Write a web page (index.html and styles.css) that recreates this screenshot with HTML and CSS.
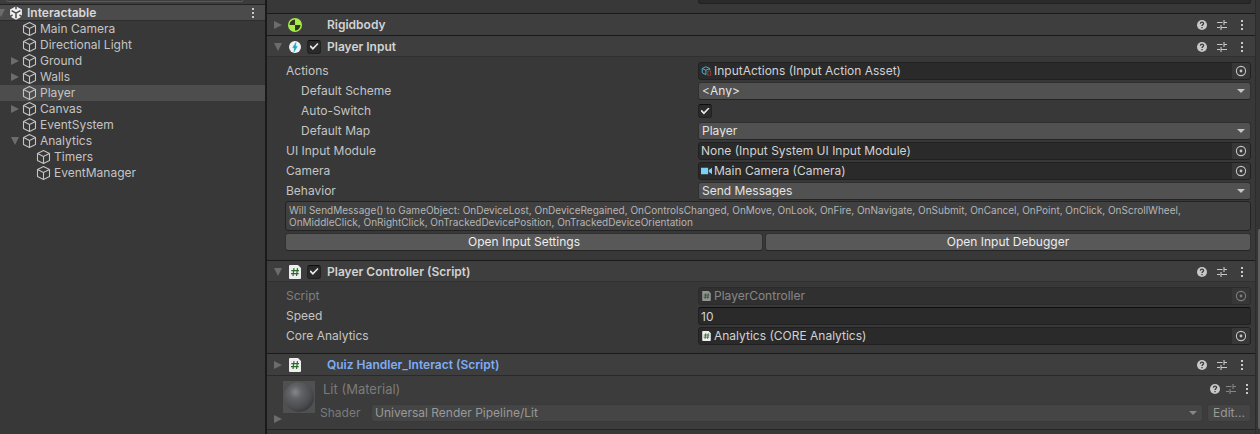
FILE: index.html
```
<!DOCTYPE html>
<html lang="en">
<head>
<meta charset="utf-8">
<title>Interactable - Inspector</title>
<link rel="stylesheet" href="styles.css">
</head>
<body>
<svg class="defs" aria-hidden="true">
  <symbol id="cube" viewBox="0 0 16 16"><path d="M7.500 1.500 13.500 4.500v7L7.500 14.500 1.500 11.500v-7zM1.500 4.500l6 3 6-3M7.500 7.500v7" fill="none" stroke="currentColor" stroke-width="1.100" stroke-linejoin="round"/></symbol>
  <symbol id="right" viewBox="0 0 8 8"><path d="M0 0 8 4 0 8z" fill="currentColor"/></symbol>
  <symbol id="down" viewBox="0 0 8 8"><path d="M0 0h8L4 8z" fill="currentColor"/></symbol>
  <symbol id="dots" viewBox="0 0 4 12"><path d="M1 1h2v2H1zM1 5h2v2H1zM1 9h2v2H1z" fill="currentColor"/></symbol>
  <symbol id="help" viewBox="0 0 10 10"><circle cx="5" cy="5" r="5" fill="currentColor"/><path d="M3.4 3.7c0-2.1 3.2-2.1 3.2-.1C6.600 4.700 5 4.600 5 6M5 7v1.300" fill="none" stroke="#3c3c3c" stroke-width="1.300"/></symbol>
  <symbol id="preset" viewBox="0 0 10 10"><path d="M0 2.500h5.500M7 2.500h3M7 0v5M0 7.500h3M4.500 7.500H10M4 5v5" fill="none" stroke="currentColor" stroke-width="1.100"/></symbol>
  <symbol id="pick" viewBox="0 0 12 12"><circle cx="6" cy="6" r="4.600" fill="none" stroke="currentColor" stroke-width="1.100"/><circle cx="6" cy="6" r="1.400" fill="currentColor"/></symbol>
  <symbol id="script" viewBox="0 0 12 14"><path d="M1 0h8l3 3v10q0 1-1 1H1q-1 0-1-1V1q0-1 1-1z" fill="#eee"/><path d="M5 3.200 4 11M8.500 3.200 7.500 11M2.300 5.700h7.700M2 8.600h7.700" fill="none" stroke="#2c6b2d" stroke-width="1.200"/></symbol>
  <symbol id="rigid" viewBox="0 0 14 14"><circle cx="7" cy="7" r="7" fill="#a8ec49"/><path d="M7 7V1.500A5.500 5.500 0 0 0 1.500 7zM7 7v5.500A5.500 5.500 0 0 0 12.500 7z" fill="#303820"/></symbol>
  <symbol id="bolt" viewBox="0 0 12 12"><circle cx="6" cy="6" r="6" fill="#f2f2f2"/><path d="M6.900 1.500 3.800 6.700h1.700L5.100 10.700 8.200 5.400H6.500z" fill="#18a4cc" stroke="#18a4cc" stroke-width=".6"/></symbol>
  <symbol id="asset" viewBox="0 0 11 11"><path d="M4.800.8 9 2.700v2M5 9.600.8 7.500V2.700L4.800.8M.8 2.700l4 2 4.200-2M4.800 4.700v4.900" fill="none" stroke="#52a9c8" stroke-width="1.100"/><path d="M8 5.500H7v1.700l-.7.700.7.700v1.700h1M9 5.500h1v1.700l.7.700-.7.700v1.700H9" fill="none" stroke="#c6502e" stroke-width=".8"/></symbol>
  <symbol id="cam" viewBox="0 0 10 7"><path d="M0 .5h6.500v6H0zM7.200 2.500 10 .5v6l-2.800-2z" fill="#7ad0f5"/></symbol>
  <symbol id="unity" viewBox="0 0 14 14"><path d="M7 .2 12.900 3.600v6.800L7 13.800 1.100 10.400V3.600z" fill="#f0f0f0"/><path d="M7 7.200v5M7 7.200 2.600 4.700M7 7.200l4.400-2.500M7 0v3.300M.5 10.800l3-1.800M13.500 10.800l-3-1.800" fill="none" stroke="#4b4b4b" stroke-width="1.500"/></symbol>
</svg>

<div class="editor">
  <aside class="hierarchy">
    <div class="toolbar"><div class="search"></div></div>
    <header class="scene">
      <button class="fold" aria-label="Collapse scene"><svg><use href="#down"/></svg></button>
      <svg class="logo"><use href="#unity"/></svg>
      <span class="grow">Interactable</span>
      <button class="icon-btn" aria-label="Scene menu"><svg class="dots"><use href="#dots"/></svg></button>
    </header>
    <ul class="tree">
      <li class="node"><span class="fold"></span><svg class="cube"><use href="#cube"/></svg>Main Camera</li>
      <li class="node"><span class="fold"></span><svg class="cube"><use href="#cube"/></svg>Directional Light</li>
      <li class="node"><button class="fold" aria-label="Expand Ground"><svg><use href="#right"/></svg></button><svg class="cube"><use href="#cube"/></svg>Ground</li>
      <li class="node"><button class="fold" aria-label="Expand Walls"><svg><use href="#right"/></svg></button><svg class="cube"><use href="#cube"/></svg>Walls</li>
      <li class="node selected"><span class="fold"></span><svg class="cube"><use href="#cube"/></svg>Player</li>
      <li class="node"><button class="fold" aria-label="Expand Canvas"><svg><use href="#right"/></svg></button><svg class="cube"><use href="#cube"/></svg>Canvas</li>
      <li class="node"><span class="fold"></span><svg class="cube"><use href="#cube"/></svg>EventSystem</li>
      <li class="node"><button class="fold" aria-label="Collapse Analytics"><svg><use href="#down"/></svg></button><svg class="cube"><use href="#cube"/></svg>Analytics</li>
      <li class="node child"><span class="fold"></span><svg class="cube"><use href="#cube"/></svg>Timers</li>
      <li class="node child"><span class="fold"></span><svg class="cube"><use href="#cube"/></svg>EventManager</li>
    </ul>
  </aside>

  <main class="inspector">
    <div class="previous"><div class="previous-field"></div></div>

    <section>
      <header class="component">
        <button class="fold" aria-label="Expand Rigidbody"><svg><use href="#right"/></svg></button>
        <svg class="kind"><use href="#rigid"/></svg>
        <span class="toggle"></span>
        <h2>Rigidbody</h2>
        <div class="actions">
          <button class="icon-btn" aria-label="Help"><svg><use href="#help"/></svg></button>
          <button class="icon-btn" aria-label="Presets"><svg><use href="#preset"/></svg></button>
          <button class="icon-btn" aria-label="More"><svg class="dots"><use href="#dots"/></svg></button>
        </div>
      </header>
    </section>

    <section>
      <header class="component open">
        <button class="fold" aria-label="Collapse Player Input"><svg><use href="#down"/></svg></button>
        <svg class="kind small"><use href="#bolt"/></svg>
        <input class="check toggle" type="checkbox" checked aria-label="Enable Player Input">
        <h2>Player Input</h2>
        <div class="actions">
          <button class="icon-btn" aria-label="Help"><svg><use href="#help"/></svg></button>
          <button class="icon-btn" aria-label="Presets"><svg><use href="#preset"/></svg></button>
          <button class="icon-btn" aria-label="More"><svg class="dots"><use href="#dots"/></svg></button>
        </div>
      </header>
      <div class="props input-props">
        <div class="row"><span>Actions</span>
          <div class="object"><svg class="mini"><use href="#asset"/></svg><span class="grow">InputActions (Input Action Asset)</span><button class="picker" aria-label="Pick actions"><svg><use href="#pick"/></svg></button></div></div>
        <div class="row sub"><label for="scheme">Default Scheme</label>
          <div class="drop"><select id="scheme"><option>&lt;Any&gt;</option></select></div></div>
        <div class="row sub"><label for="auto">Auto-Switch</label>
          <input class="check" id="auto" type="checkbox" checked></div>
        <div class="row sub"><label for="map">Default Map</label>
          <div class="drop"><select id="map"><option>Player</option></select></div></div>
        <div class="row"><span>UI Input Module</span>
          <div class="object"><span class="grow">None (Input System UI Input Module)</span><button class="picker" aria-label="Pick input module"><svg><use href="#pick"/></svg></button></div></div>
        <div class="row"><span>Camera</span>
          <div class="object"><svg class="mini"><use href="#cam"/></svg><span class="grow">Main Camera (Camera)</span><button class="picker" aria-label="Pick camera"><svg><use href="#pick"/></svg></button></div></div>
        <div class="row"><label for="behavior">Behavior</label>
          <div class="drop"><select id="behavior"><option>Send Messages</option></select></div></div>
        <p class="note">Will SendMessage() to GameObject: OnDeviceLost, OnDeviceRegained, OnControlsChanged, OnMove, OnLook, OnFire, OnNavigate, OnSubmit, OnCancel, OnPoint, OnClick, OnScrollWheel, OnMiddleClick, OnRightClick, OnTrackedDevicePosition, OnTrackedDeviceOrientation</p>
        <div class="buttons"><button class="btn">Open Input Settings</button><button class="btn">Open Input Debugger</button></div>
      </div>
    </section>

    <section>
      <header class="component open">
        <button class="fold" aria-label="Collapse Player Controller"><svg><use href="#down"/></svg></button>
        <svg class="kind"><use href="#script"/></svg>
        <input class="check toggle" type="checkbox" checked aria-label="Enable Player Controller">
        <h2>Player Controller (Script)</h2>
        <div class="actions">
          <button class="icon-btn" aria-label="Help"><svg><use href="#help"/></svg></button>
          <button class="icon-btn" aria-label="Presets"><svg><use href="#preset"/></svg></button>
          <button class="icon-btn" aria-label="More"><svg class="dots"><use href="#dots"/></svg></button>
        </div>
      </header>
      <div class="props">
        <div class="row disabled"><span>Script</span>
          <div class="object"><svg class="mini"><use href="#script"/></svg><span class="grow">PlayerController</span><button class="picker" disabled aria-label="Pick script"><svg><use href="#pick"/></svg></button></div></div>
        <div class="row"><label for="speed">Speed</label>
          <input class="number" id="speed" type="text" value="10"></div>
        <div class="row"><span>Core Analytics</span>
          <div class="object"><svg class="mini"><use href="#script"/></svg><span class="grow">Analytics (CORE Analytics)</span><button class="picker" aria-label="Pick analytics"><svg><use href="#pick"/></svg></button></div></div>
      </div>
    </section>

    <section>
      <header class="component">
        <button class="fold" aria-label="Expand Quiz Handler"><svg><use href="#right"/></svg></button>
        <svg class="kind"><use href="#script"/></svg>
        <span class="toggle"></span>
        <h2 class="override">Quiz Handler_Interact (Script)</h2>
        <div class="actions">
          <button class="icon-btn" aria-label="Help"><svg><use href="#help"/></svg></button>
          <button class="icon-btn" aria-label="Presets"><svg><use href="#preset"/></svg></button>
          <button class="icon-btn" aria-label="More"><svg class="dots"><use href="#dots"/></svg></button>
        </div>
      </header>
    </section>

    <section class="material">
      <button class="fold" aria-label="Expand material"><svg><use href="#right"/></svg></button>
      <div class="preview"><div class="sphere"></div></div>
      <div class="material-body">
        <div class="material-title">
          <span class="grow">Lit (Material)</span>
          <div class="actions tight">
            <button class="icon-btn" aria-label="Help"><svg><use href="#help"/></svg></button>
            <button class="icon-btn dim" aria-label="Presets"><svg><use href="#preset"/></svg></button>
            <button class="icon-btn" aria-label="More"><svg class="dots"><use href="#dots"/></svg></button>
          </div>
        </div>
        <div class="shader">
          <label for="shader">Shader</label>
          <div class="drop off"><select id="shader" disabled><option>Universal Render Pipeline/Lit</option></select></div>
          <button class="btn edit" disabled>Edit...</button>
        </div>
      </div>
    </section>
  </main>
  <div class="scroll"><div class="thumb"></div></div>
</div>
</body>
</html>
```
FILE: styles.css
```
* { box-sizing: border-box; }
body {
  margin: 0;
  background: #383838;
  color: #c4c4c4;
  font: 12px/16px Inter, "Liberation Sans", sans-serif;
}
button, input, select { font: inherit; color: inherit; margin: 0; }
button { padding: 0; border: 0; background: none; }
svg { display: block; flex: none; }
.defs { position: absolute; width: 0; height: 0; }
.grow { flex: 1; min-width: 0; white-space: nowrap; overflow: hidden; }

.editor { display: flex; min-height: 100vh; }

/* Hierarchy */
.hierarchy { flex: 0 0 267px; border-right: 2px solid #1a1a1a; }
.toolbar { height: 5px; padding: 0 5px 0 6px; background: #3c3c3c; border-bottom: 1px solid #232323; }
.search { height: 2px; border: 1px solid #5c5c5c; border-top: 0; border-radius: 0 0 3px 3px; margin-right: 17px; }
.scene {
  display: flex;
  align-items: center;
  height: 16px;
  padding-right: 10px;
  background: #4b4b4b;
  border-bottom: 1px solid #2c2c2c;
  color: #d8d8d8;
  font-weight: 600;
}
.scene .fold { width: 9px; margin-left: -3px; }
.logo { width: 14px; height: 14px; margin: 0 4px 0 3px; }
.fold { display: flex; flex: none; color: #6c6c6c; }
.fold svg { width: 8px; height: 8px; }
.tree { margin: 0; padding: 0; list-style: none; }
.node { display: flex; align-items: center; height: 16px; padding-left: 11px; }
.node .fold { width: 11px; }
.node.child { padding-left: 25px; }
.selected { background: #4d4d4d; }
.cube { width: 16px; height: 16px; margin-right: 2px; }

/* Inspector */
.inspector { flex: 1; min-width: 0; }
.previous { display: grid; grid-template-columns: 431fr 553fr; height: 13px; padding-right: 4px; }
.previous-field { grid-column: 2; height: 4px; background: #2a2a2a; border: 1px solid #222; border-top: 0; border-radius: 0 0 3px 3px; }
.component {
  display: flex;
  align-items: center;
  height: 22px;
  padding: 0 10px 0 7px;
  background: #3e3e3e;
  border-top: 1px solid #1a1a1a;
}
.component.open { padding-top: 1px; border-bottom: 1px solid #303030; }
.component .fold { width: 13px; }
.component h2 { flex: 1; margin: 0; font-size: 12px; line-height: 16px; font-weight: 600; color: #d2d2d2; }
.component .override { color: #7eadf5; }
.kind { width: 14px; height: 14px; margin: 0 5px 0 1px; }
.small { height: 12px; }
.toggle { flex: none; width: 14px; margin-right: 6px; }
.actions { display: flex; align-items: center; gap: 10px; }
.actions.tight { gap: 6px; padding-right: 2px; }
.icon-btn { display: flex; justify-content: center; color: #c8c8c8; }
.icon-btn svg { width: 10px; height: 10px; }
.icon-btn .dots { width: 4px; height: 12px; }
.actions .icon-btn:last-child { margin-left: 3px; }
.actions:not(.tight) .icon-btn:last-child { margin-right: 1px; }
.icon-btn.dim { color: #868686; }
.props { padding: 4px 4px 7px 19px; }
.input-props { padding-bottom: 9px; }
.row { display: grid; grid-template-columns: 412fr 553fr; align-items: center; height: 20px; }
.sub > label { padding-left: 15px; }
.object, .number {
  display: flex;
  align-items: center;
  width: 100%;
  height: 18px;
  padding: 0 0 0 2px;
  background: #2a2a2a;
  border: 1px solid #212121;
  border-radius: 3px;
}
.number { border-top-color: #0d0d0d; outline: 0; color: #d2d2d2; }
.object { color: #d2d2d2; }
.mini { width: 11px; height: 10px; margin-right: 2px; }
.picker { display: flex; align-items: center; justify-content: center; align-self: stretch; width: 18px; background: #373737; color: #c4c4c4; border-radius: 0 2px 2px 0; }
.picker svg { width: 12px; height: 12px; }
.disabled { opacity: 0.5; }
.drop { position: relative; min-width: 0; }
.drop::after {
  content: "";
  position: absolute;
  right: 6px;
  top: 7px;
  border: 4px solid transparent;
  border-top-color: #c4c4c4;
  border-bottom: 0;
  pointer-events: none;
}
.drop select {
  display: block;
  appearance: none;
  width: 100%;
  height: 18px;
  padding: 0 18px 2px 3px;
  background: #515151;
  border: 1px solid #303030;
  border-bottom-color: #242424;
  border-radius: 3px;
  color: #e4e4e4;
}
.check {
  appearance: none;
  display: grid;
  place-items: center;
  width: 14px;
  height: 14px;
  background: #2a2a2a;
  border: 1px solid #212121;
  border-top-color: #0d0d0d;
  border-radius: 3px;
}
.check:checked::before {
  content: "";
  width: 9px;
  height: 7px;
  background: #e8e8e8;
  clip-path: polygon(0 50%, 14% 32%, 38% 66%, 88% 0, 100% 14%, 38% 100%);
}
.note {
  margin: 0 0 0 -1px;
  padding: 3px;
  background: #404040;
  border: 1px solid #232323;
  border-radius: 3px;
  color: #b5b5b5;
  font-size: 10px;
  line-height: 12px;
}
.note { padding: 2px 3px; }
.buttons { display: grid; grid-template-columns: 478fr 486fr; gap: 2px; margin-left: -1px; padding-top: 2px; }
.btn {
  height: 18px;
  background: #585858;
  border: 1px solid #303030;
  border-bottom-color: #242424;
  border-radius: 3px;
  color: #eee;
  line-height: 16px;
}

/* Material */
.material {
  display: flex;
  height: 55px;
  padding: 0 4px 0 7px;
  background: #3c3c3c;
  border-top: 1px solid #2a2a2a;
  border-bottom: 1px solid #252525;
  color: #7b7b7b;
}
.material .fold { width: 9px; align-self: flex-end; padding-bottom: 6px; }
.preview { flex: none; width: 32px; height: 32px; margin-top: 5px; padding: 1px; background: #505050; }
.sphere { width: 30px; height: 30px; border-radius: 50%; background: radial-gradient(circle at 38% 34%, #85878a 0, #606265 24%, #4a4c4f 58%, #222 100%); }
.material-body { flex: 1; min-width: 0; padding: 5px 0 0 5px; }
.material-title { display: flex; align-items: center; height: 16px; padding-left: 3px; font-size: 13px; }
.shader { display: flex; align-items: center; gap: 4px; padding-top: 7px; }
.shader label { width: 47px; }
.shader .drop { flex: 1; }
.drop.off select, .btn.edit { background: #454545; border-color: #3a3a3a; color: #999; opacity: 1; }
.drop.off::after { border-top-color: #888; }
.btn.edit { width: 44px; }

.scroll { flex: 0 0 5px; padding: 229px 0 5px 2px; background: #353535; border-left: 1px solid #2c2c2c; }
.thumb { height: 100%; background: #5f5f5f; border-radius: 3px 0 0 3px; }
```
